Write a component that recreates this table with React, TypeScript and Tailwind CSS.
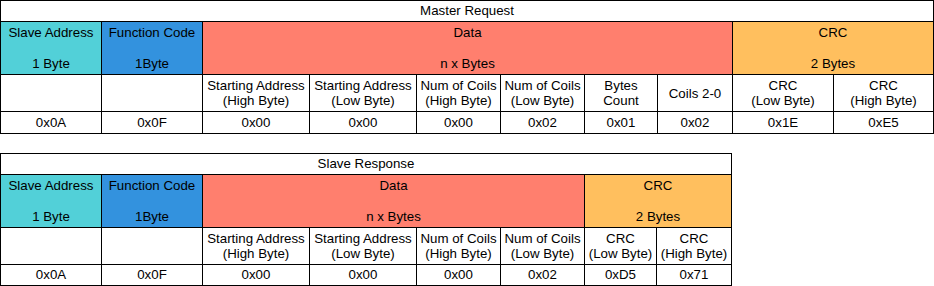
import React from 'react';

type Head = { top: string; bottom: string; span: number; color: string };

const requestHeads: Head[] = [
  { top: 'Slave Address', bottom: '1 Byte', span: 1, color: 'bg-[#52d0d8]' },
  { top: 'Function Code', bottom: '1Byte', span: 1, color: 'bg-[#3392de]' },
  { top: 'Data', bottom: 'n x Bytes', span: 6, color: 'bg-[#ff7f6e]' },
  { top: 'CRC', bottom: '2 Bytes', span: 2, color: 'bg-[#ffbf5e]' }
];

const responseHeads: Head[] = [
  { top: 'Slave Address', bottom: '1 Byte', span: 1, color: 'bg-[#52d0d8]' },
  { top: 'Function Code', bottom: '1Byte', span: 1, color: 'bg-[#3392de]' },
  { top: 'Data', bottom: 'n x Bytes', span: 4, color: 'bg-[#ff7f6e]' },
  { top: 'CRC', bottom: '2 Bytes', span: 2, color: 'bg-[#ffbf5e]' }
];

const requestFields = [
  ['', ''],
  ['', ''],
  ['Starting Address', '(High Byte)'],
  ['Starting Address', '(Low Byte)'],
  ['Num of Coils', '(High Byte)'],
  ['Num of Coils', '(Low Byte)'],
  ['Bytes', 'Count'],
  ['Coils 2-0', ''],
  ['CRC', '(Low Byte)'],
  ['CRC', '(High Byte)']
];

const responseFields = [
  ['', ''],
  ['', ''],
  ['Starting Address', '(High Byte)'],
  ['Starting Address', '(Low Byte)'],
  ['Num of Coils', '(High Byte)'],
  ['Num of Coils', '(Low Byte)'],
  ['CRC', '(Low Byte)'],
  ['CRC', '(High Byte)']
];

const requestValues = ['0x0A', '0x0F', '0x00', '0x00', '0x00', '0x02', '0x01', '0x02', '0x1E', '0xE5'];
const responseValues = ['0x0A', '0x0F', '0x00', '0x00', '0x00', '0x02', '0xD5', '0x71'];

const spanClass: Record<number, string> = {
  1: 'col-span-1',
  2: 'col-span-2',
  4: 'col-span-4',
  6: 'col-span-6',
  8: 'col-span-8',
  10: 'col-span-10'
};

function FrameTable({
  title,
  layout,
  heads,
  fields,
  values
}: {
  title: string;
  layout: string;
  heads: Head[];
  fields: string[][];
  values: string[];
}) {
  return (
    <div className={`grid ${layout} gap-px bg-black p-px text-[13.3px] leading-[1.2] text-black`}>
      <div className={`${spanClass[values.length]} flex items-center justify-center bg-white`}>
        {title}
      </div>
      {heads.map((h, i) => (
        <div
          key={i}
          className={`${spanClass[h.span]} ${h.color} flex flex-col items-center justify-center text-center leading-[15.6px]`}
        >
          <span>{h.top}</span>
          <span>&nbsp;</span>
          <span>{h.bottom}</span>
        </div>
      ))}
      {fields.map((f, i) => (
        <div
          key={i}
          className="flex flex-col items-center justify-center bg-white text-center leading-[15px]"
        >
          <span>{f[0]}</span>
          {f[1] && <span>{f[1]}</span>}
        </div>
      ))}
      {values.map((v, i) => (
        <div key={i} className="flex items-center justify-center bg-white">
          {v}
        </div>
      ))}
    </div>
  );
}

export default function App() {
  return (
    <div className="flex h-[286px] w-[934px] flex-col gap-[19px] bg-white font-['Liberation_Sans',Arial,sans-serif]">
      <FrameTable
        title="Master Request"
        layout="w-[934px] grid-cols-[100px_100px_106px_106px_83px_83px_72px_74px_100px_99px] grid-rows-[20px_52px_36px_21px]"
        heads={requestHeads}
        fields={requestFields}
        values={requestValues}
      />
      <FrameTable
        title="Slave Response"
        layout="w-[732px] grid-cols-[100px_100px_106px_106px_83px_83px_71px_74px] grid-rows-[20px_52px_36px_20px]"
        heads={responseHeads}
        fields={responseFields}
        values={responseValues}
      />
    </div>
  );
}
